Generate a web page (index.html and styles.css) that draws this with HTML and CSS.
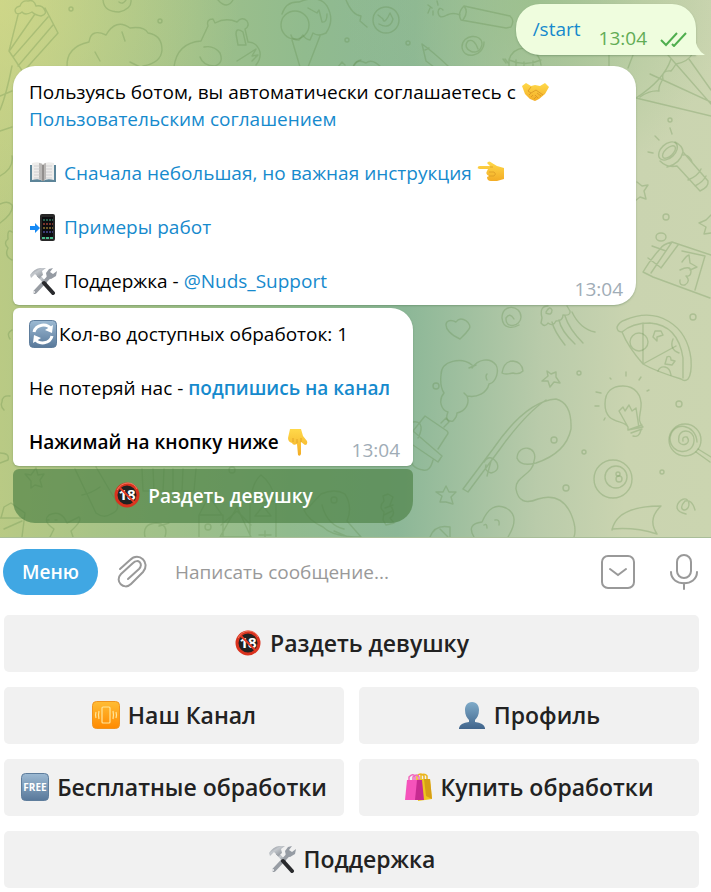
FILE: index.html
```html
<!DOCTYPE html>
<html lang="ru">
<head>
<meta charset="utf-8">
<meta name="viewport" content="width=device-width, initial-scale=1">
<title>Чат</title>
<link rel="stylesheet" href="styles.css">
</head>
<body>
<svg class="defs" aria-hidden="true">
  <defs>
    <linearGradient id="gold" x2="0" y2="1"><stop stop-color="#ffd94a"/><stop offset="1" stop-color="#f3ac25"/></linearGradient>
    <linearGradient id="steel" x2="0" y2="1"><stop stop-color="#9dbad3"/><stop offset="1" stop-color="#58789a"/></linearGradient>
    <linearGradient id="person" x2="0" y2="1"><stop stop-color="#7fabc9"/><stop offset="1" stop-color="#41658c"/></linearGradient>
    <linearGradient id="orange" x2="0" y2="1"><stop stop-color="#ffbd35"/><stop offset="1" stop-color="#ff8a00"/></linearGradient>
    <linearGradient id="metal" x2="1" y2="1"><stop stop-color="#717780"/><stop offset=".4" stop-color="#c5c9ce"/><stop offset="1" stop-color="#7d838a"/></linearGradient>
  </defs>
  <symbol id="shake" viewBox="0 0 28 28">
    <path d="M1 8 5 5l5 3 4-1 5 1 5-3 4 4-4 7-6 5-4 2-5-2-5-5z" fill="url(#gold)"/>
    <path d="m10 9-3 4 3 2 5-3 7 5M8 17l2-2m0 4 2-2m1 4 2-2m2 1-3-3m6 1-4-3" fill="none" stroke="#d89422" stroke-width=".8"/>
  </symbol>
  <symbol id="book" viewBox="0 0 28 28">
    <path d="M1 6h26v17H1z" fill="#5c8498"/>
    <path d="M3 4q7-2 11 1 4-3 11-1v17q-7-2-11 1-4-3-11-1z" fill="#eeedeb"/>
    <path d="M10 4q3 0 4 2v16l-4-2zM14 6q1-2 3-2v16l-3 2z" fill="#b9b7b5"/>
    <path d="M5 7h6M5 10h6m-6 3h6m-6 3h6m-6 3h6m6-12h6m-6 3h6m-6 3h6m-6 3h6m-6 3h6" stroke="#c8c8ca" stroke-width=".8"/>
    <path d="M14 6v16" stroke="#6a6765"/>
  </symbol>
  <symbol id="phone" viewBox="0 0 28 28">
    <rect x="11" y="1" width="15" height="27" rx="2" fill="#282828"/>
    <rect x="13" y="4" width="11" height="20" fill="#0c0c10"/>
    <path d="M14 7h10" stroke="#347b62" stroke-width="1.5" stroke-dasharray="2 1"/>
    <path d="M14 11h10" stroke="#9b4235" stroke-width="1.5" stroke-dasharray="2 1"/>
    <path d="M14 15h10" stroke="#8d7230" stroke-width="1.5" stroke-dasharray="2 1"/>
    <path d="M14 19h10" stroke="#4c4b94" stroke-width="1.5" stroke-dasharray="2 1"/>
    <path d="M13 25h11" stroke="#48b989" stroke-width="2" stroke-dasharray="3 1"/>
    <path d="M1 13h5v-3l5 5-5 5v-3H1z" fill="#168af5"/>
  </symbol>
  <symbol id="tools" viewBox="0 0 28 28">
    <path d="M21 9 6 25" stroke="#989da4" stroke-width="4" stroke-linecap="round"/>
    <path d="m24 1-4 1-3 4 1 5 4 1 5-3 1-5-4 3-3-2z" fill="#959ba3"/>
    <circle cx="5" cy="25" r="1" fill="#f5f5f5"/>
    <path d="m9 8 8 9" stroke="url(#metal)" stroke-width="3"/>
    <path d="m15 16 9 10" stroke="#292a2d" stroke-width="4" stroke-linecap="round"/>
    <path d="M1 8q4-6 10-7h6l-4 3 1 4-4 3-4-4-4 4z" fill="url(#metal)"/>
  </symbol>
  <symbol id="hand-left" viewBox="0 0 28 28">
    <path d="M1 10q-1-3 2-3h10l-3-3q2-3 5 0l5 3 7 2v11l-7 2h-6q-4 0-4-4l2-1q-4-2-2-5l1-2H3q-2 0-2-1z" fill="url(#gold)"/>
    <path d="M13 8h3m-4 5h5q3 2 0 4h-5" fill="none" stroke="#dc9c25" stroke-width=".8"/>
  </symbol>
  <symbol id="hand-down" viewBox="0 0 28 28">
    <path d="M6 1h11l2 7 4 5q1 4-2 4l-4-3v12q-1 3-3 1l-1-11q-4 2-5-1-4-1-4-5z" fill="url(#gold)"/>
    <path d="M17 14v-4m-4 5v-4m-4 3v-4" fill="none" stroke="#dc9c25" stroke-width=".8"/>
  </symbol>
  <symbol id="refresh" viewBox="0 0 28 28">
    <rect x=".5" y=".5" width="27" height="27" rx="4" fill="url(#steel)" stroke="#5e7d9c"/>
    <path d="M5 12c2-8 13-9 17-3M23 16c-2 8-13 9-17 3" fill="none" stroke="#fff" stroke-width="3"/>
    <path d="m24 5-1 8-7-3zM4 23l1-8 7 3z" fill="#fff"/>
  </symbol>
  <symbol id="vibrate" viewBox="0 0 28 28">
    <rect x=".5" y=".5" width="27" height="27" rx="4" fill="url(#orange)" stroke="#ef9420"/>
    <g fill="none" stroke="#ffe59a" stroke-width="1.2"><rect x="10" y="6" width="8" height="16" rx="1"/><path d="M7 10q-1 4 0 8m-3-7q-1 3 0 6m17-7q1 4 0 8m3-7q1 3 0 6"/></g>
  </symbol>
  <symbol id="profile" viewBox="0 0 28 28">
    <path d="M14 1c5 0 7 4 7 8 0 5-2 8-4 10v2q9 1 10 6v1H1v-1q1-5 10-6v-2C9 17 7 14 7 9c0-4 2-8 7-8z" fill="url(#person)"/>
  </symbol>
  <symbol id="bags" viewBox="0 0 28 28">
    <path d="M13 7V3q4-4 7 0v4M17 6V2q4-2 6 1v4" fill="none" stroke="#ebb51c" stroke-width="1.5"/>
    <path d="M13 6h13l2 20-14 2z" fill="#efc51f"/><path d="M20 6h6l2 20-6-3z" fill="#d69e15"/>
    <path d="M5 8V4q4-4 6-1v5M9 8V4q4-4 6 0v4" fill="none" stroke="#f169bd" stroke-width="1.5"/>
    <path d="M3 7h14v20H1z" fill="#f553bb"/><path d="m13 7 5 0 2 20H11z" fill="#c72a91"/>
  </symbol>
</svg>

<main class="app">
  <section class="chat" aria-label="Сообщения">
    <svg class="doodles" viewBox="0 0 711 537" preserveAspectRatio="xMinYMin slice" aria-hidden="true">
      <path d="M16 13q-3-5 4-7 2-6 8-5 6-2 8 5 6-1 8 3 4 5-3 7-6-1-9-4-7 4-10 0-3 3-6 1zM18 15 9 51l14 21 35-39L45 8M10 50l25-36M13 57l35-40M18 66l35-41"/>
      <path d="M67 67q-1-20 22-25 2-14 17-7 10-17 24-7 14-2 18 5 14 2 14 17-1 13-19 16M95 52l5 9m22-29 3 9m5 21 10 5"/>
      <path d="M103 0q1 12 16 12 13-3 12-12M119 2q4 3 7-2M218 0q9 10 15 0"/>
      <circle cx="71" cy="9" r="2"/><circle cx="160" cy="21" r="2"/><circle cx="347" cy="40" r="2"/><circle cx="408" cy="43" r="2"/>
      <path d="M174 67q3-24 27-26l7-15q-2-7 5-7l2 4q11-6 22-1 5-6 10-1 3 5-2 8l3 13q9 0 12 10 1 7-4 13M204 47q10-2 16 6 4 10-5 13-12 0-15-9M236 34q0-7 7-2l3 13h-8zM237 61l19-12-4 7 6-1-6 6"/>
      <circle cx="295" cy="25" r="14"/><path d="M282 14q4-13 17-12 20-8 28 4 8 14-1 27-8 4-13 0l-3 7q-5-1-7-5l-4 5q-7 0-8-5M308 8l9 5 2-3 3 12q5 1 5-8M292 40l8 27m20-31-12 31m30 0 4-5 3 3m8 2q4-7 8-7M346 0q6 15 15 16l-1 5 7 6"/>
      <circle cx="386" cy="20" r="13"/><path d="M378 15l5 4q1 5 5-2l2-4 3 6q-3 11-14 5"/>
      <path d="m464 6 46 10q5 4 1 11l-5 1-45-8q-4-7 3-14 5 6-1 14m-3-5q-7-3-13 0-8 5-9-3 1-6 5-2m-15-5 4 3m5-7 1 4m-8 3-2 5m5-2v4"/>
      <path d="m422 44 4 17 8 6M422 44q10 7 26 22M425 50l4-2M478 49q-4-11-10-8c-8 9 12 18 14 3 0-11-20-10-20 3 1 13 22 10 22-5M509 67v-7q3-11 15-12 15 2 17 17M509 60q16 7 32 0m-25 0v7m8-5v5m9-6v6m-27-4-3-4m2 0 4 5M353 67q3-9 13-4 6-5 15 4"/>
      <path d="M609 55v12m24-12-5 13m65-15q-5 9-17 11-3 5-5 7-10-1-8 8-5 8-4 12-9-1-19 6M689 59l22 31m-43-35 43 49M650 74l61 28M636 98l75 18M636 98q28-18 35-39"/>
      <ellipse cx="668" cy="151" rx="11" ry="7" transform="rotate(-43 668 151)"/><ellipse cx="669" cy="152" rx="8" ry="4" transform="rotate(-43 669 152)"/>
      <path d="M675 142q8 4 8 10l25 29q1 6-8 10l-23-25q-10 2-17-5M667 167q13-3 16-15M688 180q10-4 13-11M695 186q8-4 11-10M683 155q6-1 9 7M670 128l2 6m-17 2 4 4m-11 12 5 1"/>
      <path d="m637 182 5 4 6-1-4 6 2 8-6-2-5 4M711 215l-5 5-7 3 7 4-2 7 7-1"/>
      <circle cx="670" cy="120" r="2"/><circle cx="666" cy="217" r="3"/><ellipse cx="661" cy="237" rx="5" ry="4"/>
      <path d="M711 255 672 242q-9 2-12 7-10 11-17 23l10 5 57 21M672 242l-21 31m27-28-17 23m-13-10 12 9m-8-21 14 5m16 0 23 5-10 34M680 270q10-5 11 1 0 6-5 5 5 5-1 9-6 1-5-5m2-18q5-7 7-7l1 8 7 4-7 3"/>
      <path d="M12 66q-6 30-12 44m12 17-12 4m12-40-12 5m12 60q2 12-12 20m0 28q8-4 12 1 2 8-12 18m12 9q-5-4-4 7-5 4 0 9-4 8 4 12m0 70q-6 3-2 9m0 57q-8-1-8 6-2 4 2 8m-4 43q10 0 8 7l-8 3"/>
      <path d="M460 339c-20-9-16-23-4-17 5-8 17 2 13 7-4 6-8 9-9 10M514 319q-4-7-8-1c-1 12 15 8 15-1 0-12-19-14-19 1 1 12 12 10 17 7"/>
      <path d="M548 306q-9 0-6 12l-1 5q4 5 7 0 5 4 8-2 7 0 7-6 8 1 7-4l-3-5M552 322q2 9 13 23m-6-25q2 11 16 24m-10-28q4 13 18 27m-11-31q8 17 23 20M546 312q4-7 6-2 0 6-6 3"/>
      <path d="M617 327q2-5 8-7c33-14 62 5 66 39q1 15-3 20-3 3-7 0-26-8-38-15-15-17-21-32-5 0-5-5zM622 332q10-9 28-9 28 2 33 35v20M643 323v41l33-18"/><circle cx="639" cy="342" r="9"/><path d="M655 331h6l2 4-6 2 0 4-4-4zm12 26q4-2 4 3l4 1-3 4-7-1zm-9 14q2-5 7-4t6 8m2-36q-4 10 6 14"/>
      <path d="M472 365c-10-8-31-5-31 10-1 9 1 15 3 18-6 7-3 17 4 19-3 7 0 10 5 9 2-2 4-6 4-8 9-2 13-10 10-17 10 2 20-3 22-12 8-2 10-14 7-19-6-8-18-6-24 3M469 368l7-3m-9 31-3-3m23-13q-2-4 0-6M502 373q2-12 11-12 9 1 10 10-4 4-10 2-8 2-11 0z"/>
      <path d="m413 431 12-15 22 15q2 2 0 4l-9 14M413 431l29 25-4 6-28-19m31-20 5-5 3 4-5 5m-34 29q0 12 13 14 7 2 10-10m-23-37q7-3 10 1 3 5-2 14"/>
      <path d="m547 371 1 5-6 5 6 0 2 6 4-5 6 1-4-6 0-5-5 2zm-107 131 2-6-6-4 7 0 3-6 3 6 7 0-5 5 2 7-7-2z"/>
      <path d="m463 489 30-40q33-48 63-50 16 4 15 30-5 24-35 34-16 4-19-5c1-15 22-12 17 3-1 14-19 15-18 28q3 18 22 10 23-7 33 15 6 14 3 23M463 489l5 3 32-43q26-36 46-49M484 462q6-9 13 1 3 8-6 10-7-2-5-8m5-4-4 15"/>
      <path d="M628 427C624 419 605 425 605 404c0-13 8-18 18-18 12 0 19 9 18 21-1 10-4 13 2 20l-15 3zM628 427l-9-16 4-4 2 4 4-6 3 6 4-3 3 20M628 430l14-5m-11 8 11-4m-9 7q6 2 8-6M596 392l5 1m-6 13h4m12-27-1-1m16-6v4m15 1-2 3m8 11 2-1m-44 28-1 2"/>
      <circle cx="685" cy="440" r="16"/><path d="m698 449 13 8m-15-5 14 10M683 441q-1-5 4-4c5 7-5 10-8 5-3-15 16-14 15-1-1 15-24 14-24-3 3-18 26-14 27 4"/>
      <circle cx="613" cy="479" r="19"/><circle cx="616" cy="477" r="11"/><circle cx="618" cy="474" r="2"/><circle cx="619" cy="479" r="3"/>
      <path d="M612 530q5-24 49-24-14 13-4 28m-45-5q23-2 45 5M474 537q-8-13 8-15 9-21 24-14 15 8 2 29m-24-12q3-2 3 3m8-8q5-1 4 5m-69 12q5-13 20-10v10m-10-8 8 8"/>
      <path d="M695 510q-3-11-10-9c-9 10 3 12 4 4 0-11-12-5-12 2q0 5 9 7"/>
      <circle cx="436" cy="386" r="3"/><circle cx="554" cy="440" r="3"/><circle cx="579" cy="373" r="2"/><circle cx="679" cy="404" r="3"/><circle cx="693" cy="317" r="3"/><circle cx="584" cy="452" r="2"/><circle cx="662" cy="472" r="2"/><circle cx="566" cy="488" r="3"/>
      <path d="m25 474 6 1 5-7 2 7 6-1-4 6 2 7-7-2-4 3 0-7zM75 469l21 44q8 6 15 1 10-4 5-13l-20-34m-14 28q10-2 18-8M142 469l1 22h51l2-22m-43 0 1 22m10-22-1 22m10-22v22m10-22-1 22M250 537v-36q3-20 11-26 11 8 15 26v36m-26-36q12 4 24 0m-19 15 8-10 8 10zm10 15v9m-6-5h12M199 515l10-19 13 19zm0 0v22m24-22v22m-3 0 17-30 14 30zm1-12 16-14 14 14"/>
      <path d="m308 508 13-14q14-6 24 0 8 13 2 27l14 16q-28 0-38-10-15-7-19-17zm14-3q5 20 22 24m-10 2 14 6M383 496l5-2 5 3-3 8q7 9 0 13l4 5-8 2-3-5 1-8q-6-5 0-11zm2 12 8-3m-9 10 8-4M145 537q-3-13 11-14 13 1 9 14m-6-11 10-3M50 537l4-8q-12-8-5-14 12-6 18 8l12-6q4 3-8 14l2 6m-26-17h2m6 0h2M0 518h24M1 518l3-11 7-4 7 5 7 5-3 24M4 529l18-8"/>
      <circle cx="232" cy="470" r="3"/><circle cx="334" cy="500" r="3"/><circle cx="208" cy="527" r="3"/>
    </svg>

    <article class="bubble sent">
      <a href="#start">/start</a>
      <span class="receipt"><time>13:04</time>
        <svg class="ticks" viewBox="0 0 28 16" aria-label="Прочитано"><path d="m1 9 5 5L17 2M12 13l2 2L26 2"/></svg>
      </span>
      <svg class="tail" viewBox="0 0 12 20" aria-hidden="true"><path d="M0 0v20h11Q1 14 1 0z"/></svg>
    </article>

    <article class="bubble received intro">
      <p>Пользуясь ботом, вы автоматически соглашаетесь с <svg class="emoji"><use href="#shake"/></svg> <a href="#terms">Пользовательским соглашением</a></p>
      <p><svg class="emoji"><use href="#book"/></svg> <a href="#guide">Сначала небольшая, но важная инструкция</a> <svg class="emoji"><use href="#hand-left"/></svg></p>
      <p><svg class="emoji"><use href="#phone"/></svg> <a href="#examples">Примеры работ</a></p>
      <div class="last-line"><p><svg class="emoji"><use href="#tools"/></svg> Поддержка - <a href="#support">@Nuds_Support</a></p><time>13:04</time></div>
    </article>

    <div class="message-group">
      <article class="bubble received status">
        <p><svg class="emoji"><use href="#refresh"/></svg>Кол-во доступных обработок: 1</p>
        <p>Не потеряй нас - <a class="strong" href="#channel">подпишись на канал</a></p>
        <div class="last-line"><p class="strong">Нажимай на кнопку ниже <svg class="emoji"><use href="#hand-down"/></svg></p><time>13:04</time></div>
      </article>
      <button class="inline-button" type="button">
        <svg class="emoji" viewBox="0 0 28 28"><circle cx="14" cy="14" r="11" fill="#222" stroke="#d9321e" stroke-width="3"/><text x="14" y="19" text-anchor="middle" class="adult-mark">18</text><path d="m6 6 16 16" stroke="#e23b25" stroke-width="2"/><path d="M4 9q4-7 11-7 6 0 9 6" fill="none" stroke="#ef7962"/></svg>
        Раздеть девушку
      </button>
    </div>
  </section>

  <form class="composer">
    <button class="menu" type="button">Меню</button>
    <button class="icon-button" type="button" aria-label="Прикрепить файл">
      <svg class="icon" viewBox="0 0 36 36"><path d="M6 15 16 6c9-9 21 3 13 12L17 30c-7 7-17-3-10-10L19 9c5-5 11 1 6 6L14 25"/></svg>
    </button>
    <input class="message-input" type="text" aria-label="Сообщение" placeholder="Написать сообщение...">
    <button class="icon-button" type="button" aria-label="Клавиатура бота">
      <svg class="icon" viewBox="0 0 36 36"><rect x="2" y="2" width="32" height="32" rx="6"/><path d="m10 15 8 6 8-6"/></svg>
    </button>
    <button class="icon-button mic" type="button" aria-label="Голосовое сообщение">
      <svg class="icon" viewBox="0 0 36 36"><rect x="11" y="1" width="14" height="23" rx="7"/><path d="M5 18c0 15 26 15 26 0M18 29v6"/></svg>
    </button>
  </form>

  <nav class="keyboard" aria-label="Кнопки бота">
    <button class="key wide" type="button">
      <svg class="emoji" viewBox="0 0 28 28"><circle cx="14" cy="14" r="11" fill="#222" stroke="#d9321e" stroke-width="3"/><text x="14" y="19" text-anchor="middle" class="adult-mark">18</text><path d="m6 6 16 16" stroke="#e23b25" stroke-width="2"/><path d="M4 9q4-7 11-7 6 0 9 6" fill="none" stroke="#ef7962"/></svg>
      Раздеть девушку
    </button>
    <button class="key" type="button"><svg class="emoji"><use href="#vibrate"/></svg> Наш Канал</button>
    <button class="key" type="button"><svg class="emoji"><use href="#profile"/></svg> Профиль</button>
    <button class="key" type="button">
      <svg class="emoji" viewBox="0 0 28 28"><rect x=".5" y=".5" width="27" height="27" rx="4" fill="url(#steel)" stroke="#5e7d9c"/><text x="14" y="18" text-anchor="middle" class="free-mark">FREE</text></svg>
      Бесплатные обработки
    </button>
    <button class="key" type="button"><svg class="emoji"><use href="#bags"/></svg> Купить обработки</button>
    <button class="key wide" type="button"><svg class="emoji"><use href="#tools"/></svg> Поддержка</button>
  </nav>
</main>
</body>
</html>
```
FILE: styles.css
```css
* { box-sizing: border-box; }

body {
  margin: 0;
  background: #fff;
  color: #000;
  font-family: "Open Sans", "Noto Sans", sans-serif;
  font-size: 19px;
  line-height: 27px;
}

p { margin: 0; }
a { color: #168acd; text-decoration: none; }
button, input { font: inherit; border: 0; padding: 0; background: none; }
button { cursor: pointer; }

.defs { position: absolute; width: 0; height: 0; }
.adult-mark { font: 700 15px "Open Sans", sans-serif; fill: #fff; }
.free-mark { font: 700 10px "Open Sans", sans-serif; fill: #fff; }

.emoji { width: 28px; height: 28px; vertical-align: middle; margin: -4px 2px 0 0; }
.strong { font-weight: 600; }

.chat {
  position: relative;
  display: flex;
  flex-direction: column;
  align-items: flex-start;
  padding: 4px 15px 14px 13px;
  border-bottom: 1px solid #a9bd98;
  background:
    radial-gradient(circle at 0 0, rgb(218 222 139 / 60%), transparent 240px),
    radial-gradient(ellipse at 75% 0, rgb(151 190 135 / 75%), transparent 190px),
    linear-gradient(92deg, #bccb84 0, #a9c487 15%, #91bb8e 42%, #8cb797 57%, #b9cbaa 76%, #cad4b0 88%, #cbd5b0 100%);
}

.doodles {
  position: absolute;
  inset: 0;
  width: 100%;
  height: 100%;
  fill: none;
  stroke: rgb(92 138 72 / 28%);
  stroke-width: 1.4;
  stroke-linecap: round;
  stroke-linejoin: round;
}

.bubble {
  position: relative;
  background: #fff;
  box-shadow: 0 1px 2px rgb(60 100 60 / 35%);
}

.sent {
  align-self: flex-end;
  display: flex;
  gap: 18px;
  height: 51px;
  padding: 12px 8px 0 17px;
  border-radius: 24px 24px 0 24px;
  background: #effdde;
}

.receipt { display: flex; align-items: center; gap: 13px; padding-top: 6px; color: #62ac55; }
.ticks { width: 28px; height: 16px; fill: none; stroke: #4fae4e; stroke-width: 2; }
.tail { position: absolute; right: -10px; bottom: 0; width: 12px; height: 20px; fill: #effdde; }

.received { padding: 13px 17px 10px 16px; }
.received p + p, .received p + .last-line { margin-top: 27px; }

.intro {
  width: 100%;
  max-width: 623px;
  margin-top: 11px;
  border-radius: 22px 22px 22px 6px;
}

.last-line { display: flex; justify-content: space-between; align-items: flex-end; }
.last-line time { margin: 0 -4px -8px 0; color: #a0acb6; }

.message-group { position: relative; display: grid; gap: 3px; min-width: 400px; margin-top: 3px; }
.status { border-radius: 6px 22px 6px 6px; }

.inline-button {
  height: 54px;
  border-radius: 6px 6px 22px 22px;
  background: rgb(75 128 67 / 65%);
  color: #fff;
  font-weight: 600;
}

.composer {
  display: flex;
  align-items: center;
  padding: 11px 9px 11px 3px;
}

.menu {
  height: 46px;
  padding: 0 19px;
  border-radius: 23px;
  background: #40a7e3;
  color: #fff;
  font-weight: 600;
}

.icon-button { display: grid; margin-left: 16px; }
.icon { width: 36px; height: 36px; fill: none; stroke: #999; stroke-width: 2; stroke-linecap: round; }
.mic { margin-left: 30px; }

.message-input { flex: 1; min-width: 0; margin-left: 25px; outline: 0; }
.message-input::placeholder { color: #999; opacity: 1; }

.keyboard {
  display: grid;
  grid-template-columns: 1fr 1fr;
  gap: 15px;
  padding: 9px 12px 4px 4px;
}

.key {
  height: 57px;
  border-radius: 5px;
  background: #f1f1f1;
  color: #222;
  font-size: 23px;
  font-weight: 600;
}

.wide { grid-column: 1 / -1; }
```
